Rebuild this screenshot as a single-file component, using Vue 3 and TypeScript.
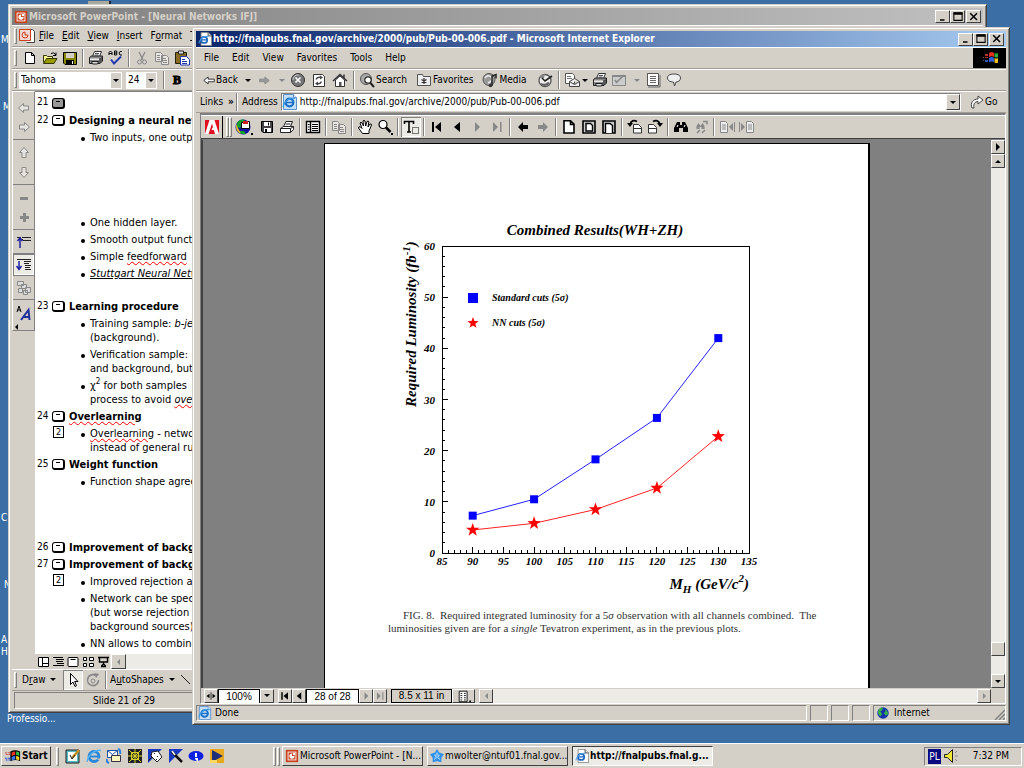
<script setup lang="ts">
interface Point { x: number; y: number }
interface Row { kind: 'head' | 'para' | 'gap' | 'gap-mid' | 'gap-small'; num?: string; title?: string; note?: string; html?: string; spell?: boolean; dim?: boolean }

const pptMenus = [['F', 'ile'], ['E', 'dit'], ['V', 'iew'], ['I', 'nsert'], ['', 'F', 'o', 'rmat'], ['T', 'ools']]
const pptTools = ['new', 'open', 'save-ppt', '|', 'print', 'spell', '|', 'cut', 'copy', 'paste']
const sideGroups = [['left', 'right'], ['up', 'down'], ['minus', 'plus'], ['collapse'], ['expand'], ['summary'], ['format']]
const viewIcons = ['view-normal', 'view-outline', 'view-slide', 'view-sorter', 'view-show']
const ieMenus = ['File', 'Edit', 'View', 'Favorites', 'Tools', 'Help']
const pdfTools = ['save', 'pdf-print', '|', 'nav', '|', 'copy', '|', 'hand', 'zoom', '|', 'text', '|', 'first', 'prev', 'next-off', 'last-off', '|', 'go-back', 'go-next', '|', 'page-actual', 'page-fit', 'page-width', '|', 'rot-left', 'rot-right', '|', 'find', 'find-next', '|', 'hl-prev', 'hl-next']
const quick = ['ql-desktop', 'ie', 'ql-mail', 'ql-net', 'ql-dice', 'ql-wand', 'ql-chat', 'ql-play']
const tasks = [
  { icon: 'ppt', label: 'Microsoft PowerPoint - [N...', active: false },
  { icon: 'star-app', label: 'mwolter@ntuf01.fnal.gov...', active: false },
  { icon: 'ie-page', label: 'http://fnalpubs.fnal.g...', active: true },
]

const rows: Row[] = [
  { kind: 'head', num: '21', title: '', dim: true },
  { kind: 'head', num: '22', title: 'Designing a neural network' },
  { kind: 'para', html: 'Two inputs, one output' },
  { kind: 'gap' },
  { kind: 'para', html: 'One hidden layer.' },
  { kind: 'para', html: 'Smooth output function' },
  { kind: 'para', html: 'Simple <s>feedforward</s>' },
  { kind: 'para', html: '<i class="u">Stuttgart Neural Network</i>' },
  { kind: 'gap-small' },
  { kind: 'head', num: '23', title: 'Learning procedure' },
  { kind: 'para', html: 'Training sample: <i>b-jets</i><br>(background).' },
  { kind: 'para', html: 'Verification sample:<br>and background, but' },
  { kind: 'para', html: 'χ<sup>2</sup> for both samples<br>process to avoid <s><i>over</i></s>' },
  { kind: 'head', num: '24', title: 'Overlearning', spell: true },
  { kind: 'para', note: '2', html: '<s>Overlearning</s> - network<br>instead of general rules' },
  { kind: 'head', num: '25', title: 'Weight function' },
  { kind: 'para', html: 'Function shape agrees' },
  { kind: 'gap-mid' },
  { kind: 'head', num: '26', title: 'Improvement of background' },
  { kind: 'head', num: '27', title: 'Improvement of background' },
  { kind: 'para', note: '2', html: 'Improved rejection a' },
  { kind: 'para', html: 'Network can be special<br>(but worse rejection<br>background sources)' },
  { kind: 'para', html: 'NN allows to combine' },
]

const plot = { left: 50, top: 30, right: 357, bottom: 337 }
const px = (m: number): number => plot.left + (m - 85) * (plot.right - plot.left) / 50
const py = (l: number): number => plot.bottom - l * (plot.bottom - plot.top) / 60
const masses = [90, 100, 110, 120, 130]
const toPoints = (values: number[]): Point[] => values.map((v, i) => ({ x: px(masses[i]), y: py(v) }))
const standard = toPoints([7.3, 10.5, 18.3, 26.4, 42])
const neural = toPoints([4.5, 5.8, 8.5, 12.7, 22.8])
const line = (pts: Point[]): string => pts.map(p => `${p.x},${p.y}`).join(' ')
const star = (cx: number, cy: number, r: number): string =>
  Array.from({ length: 10 }, (_, i) => {
    const a = -Math.PI / 2 + i * Math.PI / 5
    const q = i % 2 ? r * 0.4 : r
    return `${cx + q * Math.cos(a)},${cy + q * Math.sin(a)}`
  }).join(' ')
const xTicks = Array.from({ length: 51 }, (_, i) => 85 + i)
const yTicks = Array.from({ length: 31 }, (_, i) => i * 2)
const xLabels = xTicks.filter(t => t % 5 === 0)
const yLabels = yTicks.filter(t => t % 10 === 0)
</script>

<template>
  <svg class="defs" aria-hidden="true">
    <defs>
      <symbol id="ppt" viewBox="0 0 16 16"><path fill="#c8401c" d="M1 1h14v14H1z" /><path fill="#fff" d="M3 3h10v10H3z" /><path fill="#c8401c" d="M4 4h8v8H4z" /><path d="M8 5a3 3 0 1 0 3 3H8z" fill="#fff" /><path d="M9 4.500h2.500V7H9z" fill="#fff" /></symbol>
      <symbol id="ppt-doc" viewBox="0 0 16 16"><path fill="#fff" stroke="#444" d="M5.500 1.500h8l2 2v11h-8" /><path fill="#f4d8d0" stroke="#c8401c" d="M.5 1.500h11v11H.5z" /><path d="M6 4a3 3 0 1 0 3 3H6z" fill="none" stroke="#c8401c" /></symbol>
      <symbol id="ie" viewBox="0 0 16 16"><circle cx="8" cy="8.500" r="5" fill="none" stroke="#2a86d8" stroke-width="2.800" /><path d="M4 8.500h9" stroke="#2a86d8" stroke-width="2" /><path d="M9.500 10.500h5v2z" fill="#d4d0c8" /><path d="M1 14C2 7 9 1 15 2.500" fill="none" stroke="#58b0f0" stroke-width="1.500" /></symbol>
      <symbol id="ie-page" viewBox="0 0 16 16"><path fill="#fff" stroke="#888" d="M3.500.5h8l4 4v11h-12z" /><path fill="#ddd" stroke="#444" d="M11.500.5v4h4" /><circle cx="7" cy="9" r="3.500" fill="none" stroke="#2068c0" stroke-width="2" /><path d="M4 9h6" stroke="#2068c0" stroke-width="1.500" /><path d="M1 13C2 8 7 4 12 5" fill="none" stroke="#4ca0e8" stroke-width="1.200" /></symbol>
      <symbol id="ie-tile" viewBox="0 0 16 16"><path fill="#c4e0f8" stroke="#6090c8" d="M1.500.5h10l3 3v12h-13z" /><path fill="#fff" stroke="#6090c8" d="M11.500.5v3h3" /><circle cx="7.500" cy="8.500" r="3.800" fill="none" stroke="#1c70c8" stroke-width="2.200" /><path d="M4 8.500h7" stroke="#1c70c8" stroke-width="1.500" /><path d="M1 13C2 7 8 3 13 4.500" fill="none" stroke="#3c98e8" stroke-width="1.200" /></symbol>
      <symbol id="new" viewBox="0 0 16 16"><path fill="#fff" stroke="#000" d="M3.500 2.500h6l3 3v8h-9zM9.500 2.500v3h3" /></symbol>
      <symbol id="open" viewBox="0 0 16 16"><path fill="#ff9" stroke="#330" d="M1.500 12.500v-7h3l1 1h5v2" /><path fill="#990" stroke="#330" d="M1.500 13.500l3-5h10.500l-3 5z" /><path d="M9 3.500q3-2 5 1.500m0-2.500v3h-3" fill="none" stroke="#000" /></symbol>
      <symbol id="save-ppt" viewBox="0 0 16 16"><path fill="#880" stroke="#000" d="M1.500 2.500h13v12H3l-1.500-1.500z" /><path fill="#d4d0c8" d="M4 3h8v5H4z" /><path d="M4 10h8v4H4z" /><path fill="#fff" d="M10 11h1v3h-1z" /></symbol>
      <symbol id="save" viewBox="0 0 16 16"><path fill="#444" stroke="#000" d="M2.500 2.500h11v11H4l-1.500-1.500z" /><path fill="#fff" d="M5 3h6v4H5zM5 9h7v4H5z" /><path d="M9 3.500h1v3H9zM6 10h2v3H6z" /></symbol>
      <symbol id="print" viewBox="0 0 16 16"><path fill="#fff" stroke="#333" d="M4.500 6.500l2-5h7l-2 5" /><path d="M7 3.500h4M6.500 5h4" stroke="#555" /><path fill="#888" stroke="#222" d="M1.500 7.500l2-1.500h11v5l-2.500 2.500H1.500z" /><path fill="#eee" d="M2 8.500h9v1.500H2z" /><path fill="#ddd" stroke="#222" d="M3.500 11.500h7l-1 2.500h-5z" /><path d="M12 8v5M14 7v4" stroke="#222" /></symbol>
      <symbol id="pdf-print" viewBox="0 0 16 16"><path fill="#fff" stroke="#222" d="M4.500 7.500l2.500-5h6.500l-2 5M1.500 9.500l3-2h10v3l-3 3h-10z" /><path d="M1.500 9.500h10v4M11.500 9.500l3-2M6.500 5h5" fill="none" stroke="#222" /></symbol>
      <symbol id="spell" viewBox="0 0 16 16"><path d="M1 5V2.500L2.500 1 4 2.500V5M1 3.500h3M6.500 1v4h2q1-1 0-2 1-1 0-2zM6.500 3h2M14 1.500h-2L11 3l1 2h2" fill="none" stroke="#000" /><path d="M3 9.500l3 4 7-7" fill="none" stroke="#2238b0" stroke-width="2" /></symbol>
      <symbol id="cut" viewBox="0 0 16 16"><path d="M5 2l4 8M11 2L7 10" stroke="#888" stroke-width="1.300" /><circle cx="5.500" cy="12" r="2" fill="none" stroke="#888" /><circle cx="10.500" cy="12" r="2" fill="none" stroke="#888" /></symbol>
      <symbol id="copy" viewBox="0 0 16 16"><path fill="#e8e5e0" stroke="#888" d="M1.500 2.500h5l2 2v7h-7zM7.500 5.500h5l2 2v7h-7z" /><path d="M3 5.500h3M3 7.500h3M3 9.500h3M9 8.500h3M9 10.500h4M9 12.500h4" stroke="#888" /></symbol>
      <symbol id="paste" viewBox="0 0 16 16"><path fill="#886c20" stroke="#221" d="M1.500 2.500h11v11h-11z" /><path fill="#ddd" stroke="#222" d="M4.500 1h5v3h-5z" /><path fill="#fff" stroke="#2238b0" d="M6.500 6.500h6l3 3v5.500h-9z" /><path d="M8 9.500h3M8 11.500h5M8 13.500h5" stroke="#2238b0" /></symbol>
      <symbol id="left" viewBox="0 0 16 16"><path d="M2.500 8l5-4.500V6h5v4h-5v2.500z" fill="#e8e5e0" stroke="#888" /></symbol>
      <symbol id="right" viewBox="0 0 16 16"><path d="M13.500 8l-5-4.500V6h-5v4h5v2.500z" fill="#e8e5e0" stroke="#888" /></symbol>
      <symbol id="up" viewBox="0 0 16 16"><path d="M8 2.500L3.500 7.500H6v5h4v-5h2.500z" fill="#e8e5e0" stroke="#888" /></symbol>
      <symbol id="down" viewBox="0 0 16 16"><path d="M8 13.500L3.500 8.500H6v-5h4v5h2.500z" fill="#e8e5e0" stroke="#888" /></symbol>
      <symbol id="minus" viewBox="0 0 16 16"><path d="M4 7h8v3H4z" fill="#888" /></symbol>
      <symbol id="plus" viewBox="0 0 16 16"><path d="M4 7h3V4h3v3h3v3h-3v3H7v-3H4z" fill="#888" /></symbol>
      <symbol id="collapse" viewBox="0 0 16 16"><path d="M1 3.500h4M6 3.500h9M7 6.500h8M2 5.500h5" stroke="#222" /><path d="M4 14V4M1.500 7L4 4l2.500 3" fill="none" stroke="#2222a0" stroke-width="1.500" /></symbol>
      <symbol id="expand" viewBox="0 0 16 16"><path d="M1 2.500h14M8 4.500h7M8 6.500h5M9 8.500h6M9 10.500h5M9 12.500h6" stroke="#222" /><path d="M3 4v8M.5 9L3 12.500 5.500 9" fill="none" stroke="#2222a0" stroke-width="1.500" /></symbol>
      <symbol id="summary" viewBox="0 0 16 16"><path d="M1.500 1.500h6v4h-6zM5.500 4.500h5v4h-5zM2.500 8.500h4v4h-4zM9.500 7.500h5v5h-5zM7.500 10.500h4v4h-4z" fill="#ddd" stroke="#888" /></symbol>
      <symbol id="format" viewBox="0 0 16 16"><path d="M1 7l2-6 2 6M1.500 5h3" fill="none" stroke="#000" /><path d="M5 15l7.500-10 1 10M8 12h5" fill="none" stroke="#22309c" stroke-width="2" /></symbol>
      <symbol id="view-normal" viewBox="0 0 16 16"><path d="M3.500 3.500h10v9h-10zM7.500 3.500v9M7.500 9.500h6" fill="#fff" stroke="#000" /></symbol>
      <symbol id="view-outline" viewBox="0 0 16 16"><path d="M3 3.500h10M6 5.500h8M6 7.500h7M7 9.500h7M3 11.500h11" stroke="#000" /></symbol>
      <symbol id="view-slide" viewBox="0 0 16 16"><path d="M4 3.500h8q1 0 1 1v7q0 1-1 1H4q-1 0-1-1v-7q0-1 1-1zM5.500 5.500h5" fill="#fff" stroke="#000" /></symbol>
      <symbol id="view-sorter" viewBox="0 0 16 16"><path d="M3.500 3.500h3v3h-3zM9.500 3.500h4v3h-4zM3.500 9.500h3v3h-3zM9.500 9.500h4v3h-4z" fill="#fff" stroke="#000" /></symbol>
      <symbol id="view-show" viewBox="0 0 16 16"><path d="M3 3.500h11M4.500 4v4h8V4M8.500 8v3M6 12.500h5M6.500 12l2-2 2 2" fill="none" stroke="#000" stroke-width="1.400" /></symbol>
      <symbol id="pointer" viewBox="0 0 16 16"><path d="M5.500 1.500v11l2.500-2.500 2 4.500 1.500-.8-1.800-4.200h3.300z" fill="#fff" stroke="#000" /></symbol>
      <symbol id="rotate" viewBox="0 0 16 16"><path d="M11 3.500A5.500 5.500 0 1 0 13.500 8" fill="none" stroke="#888" stroke-width="1.600" /><path d="M9 1l5 1-3 4z" fill="#888" /><circle cx="8" cy="9" r="2" fill="none" stroke="#888" /></symbol>
      <symbol id="drawline" viewBox="0 0 16 16"><path d="M3 3l9 9" stroke="#222" /></symbol>
      <symbol id="back" viewBox="0 0 16 16"><path d="M2 8.500l5-4V7h7v3H7v2.500z" fill="#fff" stroke="#222" /></symbol>
      <symbol id="forward" viewBox="0 0 16 16"><path d="M14 8.500l-5-4V7H3v3h6v2.500z" fill="#999" stroke="#888" /></symbol>
      <symbol id="stop" viewBox="0 0 16 16"><circle cx="8" cy="8" r="6.500" fill="#777" stroke="#333" /><path d="M3 8a5 5 0 0 1 6-5" fill="none" stroke="#ccc" /><path d="M5.500 5.500l5 5m0-5l-5 5" stroke="#fff" stroke-width="1.600" /></symbol>
      <symbol id="refresh" viewBox="0 0 16 16"><path d="M2.500 2.500h9l2 2v10h-11z" fill="#fff" stroke="#333" /><path d="M5 7.500q1-3 5-2M10.500 9.500q-1 3-5 2" fill="none" stroke="#444" stroke-width="1.300" /><path d="M9 3.500l3 2-3 2zM7 9.500l-3 2 3 2z" fill="#444" /></symbol>
      <symbol id="home" viewBox="0 0 16 16"><path d="M3.500 8v6.500h9V8L8 4z" fill="#fff" stroke="#333" /><path d="M1 9l7-6.500L15 9M12 2.500V6" fill="none" stroke="#333" stroke-width="1.500" /><path d="M7 10h2.500v4H7z" fill="#555" /></symbol>
      <symbol id="search" viewBox="0 0 16 16"><circle cx="7" cy="7" r="5.500" fill="#aaa" stroke="#555" /><circle cx="9" cy="8" r="3.200" fill="#fff" stroke="#333" stroke-width="1.300" /><path d="M11 10.500l4 4.500" stroke="#222" stroke-width="2" /></symbol>
      <symbol id="fav" viewBox="0 0 16 16"><path d="M1.500 13.500v-11h5l1 2h7v9z" fill="#eee" stroke="#555" /><path d="M8 6v6M5.500 7.500l5 3M10.500 7.500l-5 3" stroke="#333" stroke-width="1.200" /></symbol>
      <symbol id="media" viewBox="0 0 16 16"><circle cx="7" cy="7.500" r="6" fill="#999" stroke="#555" /><path d="M3 6q3-4 6-1t-3 6" stroke="#eee" fill="none" stroke-width="1.500" /><path d="M10 14V4l4-1.500v4" fill="none" stroke="#222" stroke-width="1.500" /><circle cx="8.500" cy="13.500" r="1.800" fill="#333" /></symbol>
      <symbol id="history" viewBox="0 0 16 16"><circle cx="8" cy="8.500" r="6" fill="#eee" stroke="#555" stroke-width="1.300" /><path d="M3 6q0-4 5-4l-1 4z" fill="#888" /><path d="M4 13q5 3 9-2l-2-1q-3 3-7 1z" fill="#666" /><path d="M5 6l3 3 7-5" fill="none" stroke="#222" stroke-width="1.600" /></symbol>
      <symbol id="mail" viewBox="0 0 16 16"><path d="M1.500 1.500h7l2 2v8h-9z" fill="#fff" stroke="#555" /><path d="M3 4.500h4M3 6.500h5" stroke="#777" /><path d="M5.500 9.500l5-3 5 3v5h-10zM5.500 9.500l5 3 5-3" fill="#eee" stroke="#444" /></symbol>
      <symbol id="edit" viewBox="0 0 16 16"><path d="M1.500 3.500h13v10h-13z" fill="#ccc" stroke="#888" /><path d="M1 4h14" stroke="#888" stroke-width="2" /><path d="M6 10l7-7M4 8l2 3" stroke="#888" stroke-width="1.500" /></symbol>
      <symbol id="sheet" viewBox="0 0 16 16"><path d="M2.500 1.500h11v12h-11z" fill="#fff" stroke="#555" /><path d="M5 4.500h6M5 6.500h6M5 8.500h6M5 10.500h6M3 15h12V3" fill="none" stroke="#666" /></symbol>
      <symbol id="discuss" viewBox="0 0 16 16"><path d="M8 2c4.500 0 6.500 1.700 6.500 4S12.500 10 10 10l-1.500 4L7.500 10C4 10 1.500 8.500 1.500 6S3.500 2 8 2z" fill="#eee" stroke="#444" /></symbol>
      <symbol id="go" viewBox="0 0 16 16"><path d="M3 14C1 9 4 5 9 5V2l5 4-5 4V7.500C6 7.500 4 10 5 14z" fill="#fff" stroke="#444" /></symbol>
      <symbol id="adobe" viewBox="0 0 16 16"><path fill="#e01020" d="M1 1h14v14H1z" /><path fill="#fff" d="M5.500 1h5L15 15h-4L9.800 11H7.500l1-2.500h.6L8 4.500 4.500 15H1z" /></symbol>
      <symbol id="globe-pdf" viewBox="0 0 18 18"><circle cx="8" cy="9" r="7.500" fill="#14109c" /><path d="M2 5q3-5 8-3l-3 4-2 4-3-1zM3 13h6l2 3q-5 1-8-3z" fill="#10a030" /><path d="M1 6l3 6 2 4q-5-2-5-8z" fill="#e8c820" /><path d="M6.500 4.500l8-1v7h-8z" fill="#fff" stroke="#000" /><path d="M8 3h5v3H8z" fill="#d02020" /><path d="M16 15h2v2h-2z" /></symbol>
      <symbol id="nav" viewBox="0 0 16 16"><path d="M1.500 2.500h13v11h-13zM5.500 3v10" fill="#fff" stroke="#000" stroke-width="1.400" /><path d="M3 5.500h1.500M3 8h1.500M3 10.500h1.500M7 5.500h6M7 7.500h6M7 9.500h6M7 11.500h6" stroke="#000" /></symbol>
      <symbol id="hand" viewBox="0 0 16 16"><path d="M5.500 14.500L1.500 9q0-2 2-1l1.500 1.500L3 4q1-1.500 2 0l1.500 3L6 2q1-1.500 2 0l.7 5L10 2.500q1.500-1 1.800.5L11 8l2-3q1.500-.5 1.500 1l-2.500 6v2.500z" fill="#fff" stroke="#000" /></symbol>
      <symbol id="zoom" viewBox="0 0 16 16"><circle cx="6" cy="5.500" r="4" fill="#fff" stroke="#000" stroke-width="1.200" /><path d="M9 8.500l4.500 4.500" stroke="#000" stroke-width="2.500" /><path d="M14 14h2v2h-2z" /></symbol>
      <symbol id="text" viewBox="0 0 16 16"><path d="M1.500 5V2.500h9V5M6 2.500v10M4 13h4" fill="none" stroke="#000" stroke-width="1.600" /><path d="M9.500 8.500h6v6h-6z" fill="none" stroke="#000" stroke-dasharray="1 1" /></symbol>
      <symbol id="first" viewBox="0 0 16 16"><path d="M3 3h2v10H3zM12 3v10L6 8z" /></symbol>
      <symbol id="prev" viewBox="0 0 16 16"><path d="M11 3v10L5 8z" /></symbol>
      <symbol id="next-off" viewBox="0 0 16 16"><path d="M6 3v10l5-5z" fill="#888" /></symbol>
      <symbol id="last-off" viewBox="0 0 16 16"><path d="M4 3v10l5-5zM11 3h1.500v10H11z" fill="#888" /></symbol>
      <symbol id="go-back" viewBox="0 0 16 16"><path d="M3 8l5-5v3h5v4H8v3z" /></symbol>
      <symbol id="go-next" viewBox="0 0 16 16"><path d="M13 8L8 3v3H3v4h5v3z" fill="#888" /></symbol>
      <symbol id="page-actual" viewBox="0 0 16 16"><path d="M3 1.800h6.500L13 5v9H3zM9.500 2v3.500H13" fill="#fff" stroke="#000" stroke-width="1.600" /></symbol>
      <symbol id="page-fit" viewBox="0 0 16 16"><path d="M2 2h12v12H2z" fill="#ccc" stroke="#000" stroke-width="1.600" /><path d="M5 4.500h4.500L11.500 6.500v5.500H5z" fill="#fff" stroke="#000" stroke-width="1.400" /></symbol>
      <symbol id="page-width" viewBox="0 0 16 16"><path d="M2 2h12v12H2z" fill="#ccc" stroke="#000" stroke-width="1.600" /><path d="M4.500 14V4.500H9l2.500 2V14" fill="#fff" stroke="#000" stroke-width="1.400" /></symbol>
      <symbol id="rot-left" viewBox="0 0 16 16"><path d="M6.500 5.500h5l3 3v5.500h-8zM6.500 9.500h8" fill="#fff" stroke="#333" /><path d="M10 2.500Q5 0 3 5" fill="none" stroke="#000" stroke-width="1.600" /><path d="M0 4h6L3 8z" /></symbol>
      <symbol id="rot-right" viewBox="0 0 16 16"><path d="M1.500 5.500h5l3 3v5.500h-8zM1.500 9.500h8" fill="#fff" stroke="#333" /><path d="M6 2.500Q11 0 13 5" fill="none" stroke="#000" stroke-width="1.600" /><path d="M10 4h6l-3 4z" /></symbol>
      <symbol id="find" viewBox="0 0 16 16"><path d="M4 3h3v3h2V3h3l3 6v4h-5V9H6v4H1V9z" /><path d="M4 8l1-2M11 8l1-2" stroke="#fff" /></symbol>
      <symbol id="find-next" viewBox="0 0 16 16"><path d="M3.500 7l2-3 2 3 2-3 2 3v3h-3V8h-2v2h-3z" fill="#888" /><path d="M4 14l3-3M9 14l3-3M10 2.500h4v3" fill="none" stroke="#888" stroke-width="1.500" /></symbol>
      <symbol id="hl-prev" viewBox="0 0 16 16"><path d="M1.500 2.500h5l2 2v9h-7z" fill="#eee" stroke="#888" /><path d="M3 6h4M3 8h4M3 10h4" stroke="#888" /><path d="M14 4v8l-4-4zM15 3h1v10h-1z" fill="#888" /></symbol>
      <symbol id="hl-next" viewBox="0 0 16 16"><path d="M7.500 2.500h5l2 2v9h-7z" fill="#eee" stroke="#888" /><path d="M9 6h4M9 8h4M9 10h4" stroke="#888" /><path d="M2 4v8l4-4zM0 3h1v10H0z" fill="#888" /></symbol>
      <symbol id="earth" viewBox="0 0 16 16"><circle cx="8" cy="8" r="6.500" fill="#1430b0" /><path d="M3 4q3-3 5-2l-1 3-2 1 2 3-2 3Q1 9 3 4zM10 3l3 3 1 3-3 2-2-3 2-2z" fill="#38b048" /></symbol>
      <symbol id="flag" viewBox="0 0 18 16"><path d="M8 3q3-2 5 0v4q-2-1.500-5 0z" fill="#e03020" /><path d="M13.500 3q2 1 3.500 0v4q-1.500 1-3.500 0z" fill="#30b040" /><path d="M8 8q3-2 5 0v4.500q-2-2-5 0z" fill="#3060d8" /><path d="M13.500 8q2 1 3.500 0v4.500q-1.500 1-3.500 0z" fill="#f0c020" /><path d="M4 4h3v2H4zM4 7h3v1H4zM2 7h1v1H2z" fill="#b83030" /><path d="M4 10h3v2H4zM2 10h1v1H2z" fill="#3858b8" /></symbol>
      <symbol id="start" viewBox="0 0 18 16"><path d="M6 3q5-3 11 0v11q-5-3-11 0z" fill="#000" /><path d="M7.500 4q2-1 4-1v4q-2 0-4 1z" fill="#f03820" /><path d="M12.500 3q2 0 3.500 1v4q-2-1-3.500-1z" fill="#30c040" /><path d="M7.500 9q2-1 4-1v4q-2 0-4 1z" fill="#3878f0" /><path d="M12.500 8q2 0 3.500 1v4q-2-1-3.500-1z" fill="#f8d020" /><path d="M0 4h2v1H0zM3 4h3v1H3zM1 6h2v1H1zM4 6h2v1H4z" fill="#d02020" /><path d="M0 10h2v1H0zM3 10h3v1H3zM1 12h2v1H1zM4 12h2v1H4z" fill="#2040d0" /></symbol>
      <symbol id="ql-desktop" viewBox="0 0 16 16"><path d="M1 2h13v13H1z" fill="#58b8c0" stroke="#222" /><path d="M3 4h9v9H3z" fill="#fff" /><path d="M7 10l7-8" fill="none" stroke="#c89020" stroke-width="2.500" /><path d="M5 7l2 4 3-4" fill="none" stroke="#222" /></symbol>
      <symbol id="ql-mail" viewBox="0 0 16 16"><path d="M1.500 2.500h10v7h-10z" fill="#fff" stroke="#2050a0" /><path d="M1.500 2.500l5 4 5-4" fill="none" stroke="#2050a0" /><path d="M5.500 7.500h9v6h-9z" fill="#fff6c0" stroke="#334" /><path d="M12 1q3 1 2 5M3 15q-3-1-2-4" fill="none" stroke="#3080e0" stroke-width="2" /></symbol>
      <symbol id="ql-net" viewBox="0 0 16 16"><path d="M1 1h14v14H1z" fill="#222" /><path d="M2 2l12 12M14 2L2 14M8 1v14M1 8h14M4.500 4.500h7v7h-7z" fill="none" stroke="#d8d428" /></symbol>
      <symbol id="ql-dice" viewBox="0 0 16 16"><path d="M1 1h14L1 15z" fill="#1838c0" /><path d="M5 4l6-1 4 6-5 5-6-6z" fill="#fff" stroke="#222" /><path d="M7 5h1v1H7zM10 8h1v1h-1zM9 11h1v1H9z" fill="#222" /><path d="M1 13l4-4" stroke="#222" /></symbol>
      <symbol id="ql-wand" viewBox="0 0 16 16"><path d="M1 1h14L1 15z" fill="#1838c0" /><path d="M4 4l10 10" stroke="#111" stroke-width="2.500" /><path d="M4 3l3 4" stroke="#fff" stroke-width="1.500" /></symbol>
      <symbol id="ql-chat" viewBox="0 0 16 16"><ellipse cx="8" cy="8" rx="7.500" ry="5" fill="#1020e0" /><path d="M7 5h2v4H7zM7 10h3v4l-3-3z" fill="#fff" /></symbol>
      <symbol id="ql-play" viewBox="0 0 16 16"><path d="M1 1h14v14H1z" fill="#e8a820" /><path d="M3 2l11 6-11 6z" fill="#203078" /><path d="M1 12h7v3H1z" fill="#f8d860" /></symbol>
      <symbol id="star-app" viewBox="0 0 16 16"><path d="M8 0l2.500 4L16 6l-3 4v5l-5-1-5 1v-5L0 6l5.500-2z" fill="#3090e8" /><path d="M8 4l3 8-6-5h6l-6 5z" fill="none" stroke="#c0e4ff" stroke-width=".7" /></symbol>
      <symbol id="speaker" viewBox="0 0 16 16"><path d="M1.500 6.500h3l5-5v13l-5-5h-3z" fill="#f0e838" stroke="#222" /><path d="M12 5l2-2M12 8h3M12 11l2 2" stroke="#888" /></symbol>
      <symbol id="layout" viewBox="0 0 16 16"><path d="M2.500 2.500h9v12h-9z" fill="#fff" stroke="#000" /><path d="M4 5h2M8 5h2M4 7.500h2M8 7.500h2M4 10h2M8 10h2M4 12.500h2M8 12.500h2" stroke="#000" /><path d="M14 13h2v2h-2z" /></symbol>
      <symbol id="split" viewBox="0 0 16 16"><path d="M7.500 3h1v10h-1zM6 5v6L2 8zM10 5v6l4-3z" /></symbol>
      <symbol id="w-min" viewBox="0 0 16 16"><path d="M4 11h6v2H4z" /></symbol>
      <symbol id="w-max" viewBox="0 0 16 16"><path d="M2.500 2.500h11v10h-11z" fill="none" stroke="#000" stroke-width="1.400" /><path d="M2 2h12v3H2z" /></symbol>
      <symbol id="w-close" viewBox="0 0 16 16"><path d="M3 3l9 9M12 3l-9 9" stroke="#000" stroke-width="2" /></symbol>
    </defs>
  </svg>

  <main class="desktop">
    <span class="scrap s1">M</span><span class="scrap s2">M</span><span class="scrap s3">C</span><span class="scrap s4">N</span>
    <span class="scrap s5">A<br>H</span><span class="scrap s6">Professio...</span>
    <i class="peek"></i>

    <section class="window ppt">
      <header class="title">
        <svg class="i14"><use href="#ppt" /></svg>
        <h2>Microsoft PowerPoint - [Neural Networks IFJ]</h2>
        <div class="winbtns">
          <button aria-label="Minimize"><svg><use href="#w-min" /></svg></button><button aria-label="Maximize"><svg><use href="#w-max" /></svg></button><button aria-label="Close"><svg><use href="#w-close" /></svg></button>
        </div>
      </header>
      <nav class="bar menu">
        <i class="grip"></i>
        <svg class="i16"><use href="#ppt-doc" /></svg>
        <button v-for="m in pptMenus" :key="m.join('')"><template v-if="m.length === 2"><u>{{ m[0] }}</u>{{ m[1] }}</template><template v-else>{{ m[1] }}<u>{{ m[2] }}</u>{{ m[3] }}</template></button>
      </nav>
      <div class="bar tools">
        <i class="grip"></i>
        <template v-for="(t, n) in pptTools" :key="n"><i v-if="t === '|'" class="sep"></i><button v-else class="tool" :aria-label="t"><svg class="i16"><use :href="'#' + t" /></svg></button></template>
      </div>
      <div class="bar fonts">
        <i class="grip"></i>
        <label class="combo family"><select aria-label="Font"><option>Tahoma</option></select><span class="arrow"><i class="tri"></i></span></label>
        <label class="combo size"><select aria-label="Font size"><option>24</option></select><span class="arrow"><i class="tri"></i></span></label>
        <i class="sep"></i>
        <button class="bold">B</button>
      </div>
      <div class="work">
        <aside class="side">
          <div class="side-bar">
            <div v-for="(g, n) in sideGroups" :key="n" class="side-group" :class="{ pressed: g[0] === 'expand' }">
              <button v-for="s in g" :key="s" :aria-label="s"><svg class="i16"><use :href="'#' + s" /></svg></button>
            </div>
            <i class="more"></i>
          </div>
        </aside>
        <div class="pane">
          <div class="outline">
            <template v-for="(r, n) in rows" :key="n">
              <div v-if="r.kind === 'head'" class="head"><span class="num">{{ r.num }}</span><i class="slide" :class="{ dim: r.dim }"></i><b :class="{ spell: r.spell }">{{ r.title }}</b></div>
              <div v-else-if="r.kind === 'para'" class="para"><span v-if="r.note" class="note">{{ r.note }}</span><span class="dot"></span><p v-html="r.html"></p></div>
              <div v-else :class="r.kind"></div>
            </template>
          </div>
          <div class="views">
            <button v-for="v in viewIcons" :key="v" :aria-label="v"><svg class="i16"><use :href="'#' + v" /></svg></button>
            <button class="sb off" aria-label="Scroll left"><i class="tri l"></i></button>
          </div>
        </div>
      </div>
      <div class="bar draw">
        <i class="grip"></i>
        <button class="drawmenu">D<u>r</u>aw <i class="tri"></i></button>
        <button class="tool pointer" aria-label="Select"><svg class="i16"><use href="#pointer" /></svg></button>
        <button class="tool" aria-label="Rotate"><svg class="i16"><use href="#rotate" /></svg></button>
        <i class="sep"></i>
        <button class="shapes">A<u>u</u>toShapes <i class="tri"></i></button>
        <button class="tool" aria-label="Line"><svg class="i16"><use href="#drawline" /></svg></button>
      </div>
      <footer class="ppt-status"><span>Slide 21 of 29</span></footer>
    </section>

    <section class="window ie">
      <header class="title">
        <svg class="i14"><use href="#ie-page" /></svg>
        <h1>http://fnalpubs.fnal.gov/archive/2000/pub/Pub-00-006.pdf - Microsoft Internet Explorer</h1>
        <div class="winbtns">
          <button aria-label="Minimize"><svg><use href="#w-min" /></svg></button><button aria-label="Maximize"><svg><use href="#w-max" /></svg></button><button aria-label="Close"><svg><use href="#w-close" /></svg></button>
        </div>
      </header>
      <nav class="bar iemenu">
        <button v-for="m in ieMenus" :key="m">{{ m }}</button>
        <div class="logo"><svg><use href="#flag" /></svg></div>
      </nav>
      <div class="bar ietools">
        <button class="back"><svg class="i14"><use href="#back" /></svg>Back<i class="tri"></i></button>
        <button class="fwd" aria-label="Forward"><svg class="i14"><use href="#forward" /></svg><i class="tri grey"></i></button>
        <button class="tool" aria-label="Stop"><svg class="i16"><use href="#stop" /></svg></button>
        <button class="tool" aria-label="Refresh"><svg class="i16"><use href="#refresh" /></svg></button>
        <button class="tool" aria-label="Home"><svg class="i16"><use href="#home" /></svg></button>
        <i class="sep"></i>
        <button class="wide"><svg class="i16"><use href="#search" /></svg>Search</button>
        <button class="wide"><svg class="i16"><use href="#fav" /></svg>Favorites</button>
        <button class="wide"><svg class="i16"><use href="#media" /></svg>Media</button>
        <button class="tool" aria-label="History"><svg class="i16"><use href="#history" /></svg></button>
        <i class="sep"></i>
        <button class="drop" aria-label="Mail"><svg class="i16"><use href="#mail" /></svg><i class="tri"></i></button>
        <button class="tool" aria-label="Print"><svg class="i16"><use href="#print" /></svg></button>
        <button class="drop edit" aria-label="Edit"><svg class="i16"><use href="#edit" /></svg><i class="tri grey"></i></button>
        <button class="tool" aria-label="Related"><svg class="i16"><use href="#sheet" /></svg></button>
        <button class="tool" aria-label="Discuss"><svg class="i16"><use href="#discuss" /></svg></button>
      </div>
      <div class="bar address">
        <button class="links">Links <b>»</b></button>
        <i class="sep"></i>
        <label for="url">Address</label>
        <div class="field"><svg class="i16"><use href="#ie-tile" /></svg><input id="url" type="text" value="http://fnalpubs.fnal.gov/archive/2000/pub/Pub-00-006.pdf"><button class="sb" aria-label="Open list"><i class="tri"></i></button></div>
        <button class="gobtn"><svg class="i16"><use href="#go" /></svg>Go</button>
      </div>
      <div class="reader">
        <div class="pdfbar">
          <div class="adobe"><svg class="i16"><use href="#adobe" /></svg></div>
          <i class="grip"></i><i class="grip"></i>
          <button class="globe" aria-label="Open web page"><svg class="i18"><use href="#globe-pdf" /></svg></button>
          <template v-for="(t, n) in pdfTools" :key="n"><i v-if="t === '|'" class="sep"></i><button v-else class="tool" :class="{ pressed: t === 'text' }" :aria-label="t"><svg class="i16"><use :href="'#' + t" /></svg></button></template>
        </div>
        <div class="docrow">
          <div class="doc">
            <article class="page">
              <svg class="chart" viewBox="0 0 420 385" role="img" aria-label="Combined results chart">
                <text x="203" y="19" class="big" text-anchor="middle">Combined Results(WH+ZH)</text>
                <rect :x="plot.left" :y="plot.top" :width="plot.right - plot.left" :height="plot.bottom - plot.top" class="frame" />
                <line v-for="t in xTicks" :key="'x' + t" :x1="px(t)" :x2="px(t)" :y1="plot.bottom" :y2="plot.bottom - (t % 5 ? 3 : 6)" class="axis" />
                <line v-for="t in yTicks" :key="'y' + t" :x1="plot.left" :x2="plot.left + (t % 10 ? 3 : 6)" :y1="py(t)" :y2="py(t)" class="axis" />
                <text v-for="t in xLabels" :key="'xl' + t" :x="px(t)" y="349" text-anchor="middle" class="lab">{{ t }}</text>
                <text v-for="t in yLabels" :key="'yl' + t" x="43" :y="py(t) + 4" text-anchor="end" class="lab">{{ t }}</text>
                <text transform="translate(24 191) rotate(-90)" class="big">Required Luminosity (fb<tspan dy="-6" class="small">-1</tspan><tspan dy="6">)</tspan></text>
                <text x="357" y="373" text-anchor="end" class="big">M<tspan dy="4" class="small">H</tspan><tspan dy="-4"> (GeV/c</tspan><tspan dy="-7" class="small">2</tspan><tspan dy="7">)</tspan></text>
                <rect x="76" y="77" width="10" height="10" fill="#00f" />
                <polygon :points="star(81, 107, 6)" fill="#f00" />
                <text x="100" y="85" class="key">Standard cuts (5σ)</text>
                <text x="100" y="110" class="key">NN cuts (5σ)</text>
                <polyline :points="line(standard)" fill="none" stroke="#22f" />
                <polyline :points="line(neural)" fill="none" stroke="#f22" />
                <rect v-for="p in standard" :key="p.x" :x="p.x - 4" :y="p.y - 4" width="8" height="8" fill="#00f" />
                <polygon v-for="p in neural" :key="p.x" :points="star(p.x, p.y, 7)" fill="#f00" />
              </svg>
              <p class="caption">FIG. 8.&nbsp; Required integrated luminosity for a 5<i>σ</i> observation with all channels combined.&nbsp; The<br>luminosities given are for a <i>single</i> Tevatron experiment, as in the previous plots.</p>
            </article>
          </div>
          <div class="vscroll">
            <button class="sb" aria-label="Panel"><i class="tri r"></i></button>
            <button class="sb" aria-label="Up"><i class="tri t"></i></button>
            <div class="track"><i class="thumb"></i></div>
            <button class="sb" aria-label="Down"><i class="tri"></i></button>
          </div>
        </div>
        <div class="pdfstatus">
          <button class="sb" aria-label="Split"><svg class="i12"><use href="#split" /></svg></button>
          <input class="zoomval" aria-label="Zoom" value="100%"><button class="sb" aria-label="Zoom list"><i class="tri"></i></button>
          <i class="space"></i>
          <button class="sb" aria-label="First page"><svg class="i12"><use href="#first" /></svg></button><button class="sb" aria-label="Previous page"><svg class="i12"><use href="#prev" /></svg></button>
          <input class="pageval" aria-label="Page" value="28 of 28">
          <button class="sb off" aria-label="Next page"><svg class="i12"><use href="#next-off" /></svg></button><button class="sb off" aria-label="Last page"><svg class="i12"><use href="#last-off" /></svg></button>
          <i class="space"></i>
          <span class="papersize">8.5 x 11 in</span>
          <button class="sb layoutbtn" aria-label="Layout"><svg class="i14"><use href="#layout" /></svg></button>
          <i class="space"></i>
          <button class="sb off" aria-label="Left"><i class="tri l"></i></button>
          <div class="htrack"></div>
          <button class="sb off" aria-label="Right"><i class="tri r"></i></button>
          <i class="corner"></i>
        </div>
      </div>
      <footer class="iestatus">
        <span class="cell main"><svg class="i14"><use href="#ie-tile" /></svg>Done</span><span class="cell"></span><span class="cell"></span><span class="cell"></span>
        <span class="cell zone"><svg class="i14"><use href="#earth" /></svg>Internet<svg class="resize" viewBox="0 0 12 12"><path d="M2 12L12 2M6 12l6-6M10 12l2-2" stroke="#808080" stroke-width="1.500" /></svg></span>
      </footer>
    </section>

    <footer class="taskbar">
      <button class="start"><svg><use href="#start" /></svg>Start</button>
      <i class="grip"></i>
      <div class="quick"><button v-for="q in quick" :key="q" :aria-label="q"><svg class="i16"><use :href="'#' + q" /></svg></button></div>
      <i class="grip"></i><i class="grip"></i>
      <div class="tasks"><button v-for="t in tasks" :key="t.label" :class="{ active: t.active }"><svg class="i14"><use :href="'#' + t.icon" /></svg><span>{{ t.label }}</span></button></div>
      <div class="tray"><span class="lang">PL</span><svg class="i16"><use href="#speaker" /></svg><time>7:32 PM</time></div>
    </footer>
  </main>
</template>

<style>
html, body, #app { height: 100%; }
body { margin: 0; overflow: hidden; }
</style>

<style scoped>
.desktop, .desktop * { box-sizing: border-box; }
.desktop { position: relative; height: 100%; background: #3a6ea5; overflow: hidden; font: 10px/14px "DejaVu Sans Condensed", "DejaVu Sans", sans-serif; color: #000; white-space: nowrap; }
.defs { position: absolute; width: 0; height: 0; }
button, input, select { font: inherit; color: inherit; margin: 0; padding: 0; border: 0; background: none; border-radius: 0; outline: 0; }
svg { display: block; flex: none; }
.i18 { width: 18px; height: 18px; }
.i16 { width: 16px; height: 16px; }
.i14 { width: 14px; height: 14px; }
.i12 { width: 12px; height: 12px; }
h1, h2 { margin: 0; font: inherit; font-weight: bold; }
.tri { display: inline-block; flex: none; width: 0; height: 0; border: solid transparent; border-width: 3px 3px 0; border-top-color: #000; }
.tri.grey { border-top-color: #888; }
.tri.t { border-width: 0 3px 3px; border-color: transparent transparent #000; }
.tri.l { border-width: 3px 3px 3px 0; border-color: transparent #888 transparent transparent; }
.tri.r { border-width: 4px 0 4px 4px; border-color: transparent transparent transparent #000; }
.off .tri.r { border-width: 3px 0 3px 3px; border-left-color: #888; }
.sb { display: flex; flex: none; align-items: center; justify-content: center; width: 14px; height: 14px; background: #d4d0c8; border: 1px solid; border-color: #fff #404040 #404040 #fff; }
.grip { flex: none; width: 3px; height: 16px; margin-right: 2px; border: 1px solid; border-color: #fff #808080 #808080 #fff; }
.sep { flex: none; width: 2px; height: 18px; margin: 0 2px; border-left: 1px solid #808080; border-right: 1px solid #fff; }
.tool { display: flex; flex: none; align-items: center; justify-content: center; width: 20px; height: 20px; }
.scrap { position: absolute; color: #fff; line-height: 12px; }
.s1 { left: 1px; top: 34px; } .s2 { left: 3px; top: 101px; } .s3 { left: 1px; top: 512px; } .s4 { left: 4px; top: 579px; } .s5 { left: 1px; top: 634px; } .s6 { left: 7px; top: 713px; }
.peek { position: absolute; left: 88px; top: 1px; width: 23px; height: 4px; background: #a8aaa0; border-right: 2px solid #223; }

.window { position: absolute; display: flex; flex-direction: column; background: #d4d0c8; border: 1px solid; border-color: #d4d0c8 #404040 #404040 #d4d0c8; box-shadow: inset 1px 1px #fff, inset -1px -1px #808080; padding: 3px; }
.ppt { left: 8px; top: 4px; right: 37px; bottom: 55px; }
.ie { left: 192px; top: 27px; right: 14px; bottom: 43px; }
.title { display: flex; flex: none; align-items: center; height: 17px; padding: 0 2px; gap: 1px; }
.ppt .title { background: linear-gradient(90deg, #808080, #c0c0c0); color: #d4d0c8; }
.ie .title { background: linear-gradient(90deg, #0a246a, #a6caf0); color: #fff; height: 16px; }
.winbtns { display: flex; margin-left: auto; }
.winbtns button { width: 15px; height: 13px; background: #d4d0c8; border: 1px solid; border-color: #fff #404040 #404040 #fff; display: flex; align-items: center; justify-content: center; }
.winbtns button:last-child { margin-left: 1px; }
.winbtns svg { width: 12px; height: 12px; }
.bar { display: flex; flex: none; align-items: center; height: 22px; border-top: 1px solid #fff; border-bottom: 1px solid #a09c94; padding: 0 2px; overflow: hidden; }

.menu { gap: 8px; }
.menu .grip { margin-right: -6px; }
.menu .i16 { margin-right: -4px; }
.tools .grip { margin-right: 3px; }
.combo { display: flex; align-items: center; height: 17px; background: #fff; margin-right: 4px; }
.combo select { appearance: none; flex: 1; min-width: 0; padding-left: 2px; }
.arrow { display: flex; align-items: center; justify-content: center; width: 10px; height: 15px; background: #d4d0c8; margin-right: 1px; }
.family { width: 103px; } .size { width: 31px; }
.bold { width: 20px; font: bold 12px/14px "Liberation Serif", serif; -webkit-text-stroke: 1px #000; }
.work { display: flex; flex: 1; min-height: 0; }
.side { width: 23px; flex: none; }
.side-bar { border: 1px solid; border-color: #fff #808080 #808080 #fff; height: 240px; padding-top: 3px; display: flex; flex-direction: column; }
.side-group { border-bottom: 1px solid #808080; display: flex; flex-direction: column; align-items: center; padding: 3px 0; }
.side-group button { height: 19px; display: flex; align-items: center; }
.side-group:nth-child(n + 4) { padding: 2px 0; }
.side-group.pressed { padding: 1px 0; }
.side-group:nth-last-child(2) { border: 0; padding: 3px 0 0; }
.pressed { background: #ecebe6; box-shadow: inset 1px 1px #808080, inset -1px -1px #fff; }
.more { width: 0; height: 0; margin: 2px 0 0 2px; border: solid transparent; border-width: 3px 3px 3px 0; border-right-color: #000; }
.pane { flex: 1; min-width: 0; display: flex; flex-direction: column; }
.outline { flex: 1; min-height: 0; overflow: hidden; background: #fff; border-top: 1px solid #808080; padding-top: 2px; font-size: 11px; }
.head { display: flex; align-items: center; height: 17px; }
.head:first-child { height: 18px; }
.num { width: 17px; padding-left: 2px; font-size: 10px; line-height: 15px; align-self: flex-start; }
.slide { width: 13px; height: 11px; border: 1px solid #000; border-right-width: 2px; border-bottom-width: 2px; border-radius: 3px; margin-right: 4px; position: relative; }
.slide::after { content: ""; position: absolute; left: 3px; top: 2px; width: 4px; height: 1px; background: #000; }
.slide.dim { background: #999; }
.para { position: relative; display: flex; padding: 2px 0 1px 46px; line-height: 14px; }
.para p { margin: 0; }
.dot { width: 4px; height: 4px; border-radius: 50%; background: #000; margin: 6px 5px 0 0; }
.note { position: absolute; left: 18px; top: 1px; width: 11px; height: 12px; border: 1px solid #000; font-size: 9px; line-height: 10px; text-align: center; }
.para :deep(s), .spell { text-decoration: underline wavy #f00 1px; text-underline-offset: 1px; }
.para :deep(sup) { font-size: 8px; line-height: 0; }
.para :deep(.u) { text-decoration: underline; }
.gap { height: 68px; } .gap-mid { height: 49px; } .gap-small { height: 16px; }
.views { display: flex; flex: none; align-items: center; height: 15px; background: #ecebe6; }
.views button { width: 15px; height: 15px; background: #d4d0c8; }
.views .sb { margin-left: 1px; }
.draw { height: 22px; }
.draw .tri { margin: 0 0 2px 2px; }
.drawmenu { width: 40px; text-align: left; margin: 0 1px 0 3px; }
.pointer { background: #ecebe6; box-shadow: inset 1px 1px #808080, inset -1px -1px #fff; }
.shapes { width: 66px; text-align: left; margin-left: 1px; }
.ppt-status { flex: none; height: 18px; padding: 1px 2px; }
.ppt-status span { display: block; border: 1px solid; border-color: #808080 #fff #fff #808080; height: 17px; line-height: 15px; padding-left: 78px; }

.iemenu { gap: 13px; padding: 0 0 0 8px; }
.logo { margin-left: auto; background: #000; width: 33px; height: 20px; display: flex; align-items: center; justify-content: center; }
.logo svg { width: 18px; height: 16px; }
.ietools { padding-left: 6px; }
.ietools button { display: flex; align-items: center; }
.back { width: 49px; }
.back .tri { margin: 0 0 0 auto; }
.fwd { margin: 0 3px 0 6px; width: 28px; gap: 8px; }
.ietools .tool { margin-right: 1px; }
.ietools .sep { margin-right: 4px; }
.wide { margin-right: 9px; gap: 1px; }
.drop { width: 26px; gap: 2px; }
.edit { width: 32px; gap: 7px; }
.address { padding: 0 0 0 4px; }
.links { width: 34px; text-align: left; }
.links b { margin-left: 2px; }
.address label { margin: 0 3px 0 2px; }
.field { flex: 1; display: flex; align-items: center; height: 18px; background: #fff; border: 1px solid; border-color: #808080 #fff #fff #808080; }
.field input { flex: 1; min-width: 0; padding-left: 2px; }
.field .sb { height: 16px; }
.gobtn { display: flex; align-items: center; width: 45px; padding-left: 8px; }
.reader { flex: 1; min-height: 0; display: flex; flex-direction: column; border: 1px solid #808080; border-top-width: 2px; border-bottom-color: #fff; border-right-color: #fff; margin-left: 4px; }
.pdfbar { display: flex; flex: none; align-items: center; height: 24px; border-bottom: 1px solid #404040; border-top: 1px solid #fff; }
.adobe { display: flex; align-items: center; justify-content: center; width: 22px; height: 22px; border-right: 1px solid #000; margin-right: 3px; }
.pdfbar .grip { margin-right: 0; height: 20px; }
.globe { width: 24px; display: flex; justify-content: center; margin-right: 1px; }
.docrow { display: flex; flex: 1; min-height: 0; border-top: 1px solid #808080; border-left: 2px solid #404040; }
.doc { flex: 1; display: flex; justify-content: center; background: #808080; overflow: hidden; padding-top: 3px; }
.page { width: 546px; height: 704px; background: #fff; border: 1px solid #000; border-right-width: 2px; padding: 72px 60px 0 63px; }
.chart { width: 420px; height: 385px; margin-left: 4px; font-family: "Liberation Serif", serif; font-weight: bold; font-style: italic; }
.big { font-size: 15px; } .small { font-size: 11px; } .lab { font-size: 11px; } .key { font-size: 10px; }
.frame { fill: none; stroke: #000; shape-rendering: crispEdges; }
.axis { stroke: #000; shape-rendering: crispEdges; }
.caption { margin: 8px 0 0; font: 11px/13px "Liberation Serif", serif; text-indent: 15px; color: #333; }
.vscroll { width: 14px; flex: none; display: flex; flex-direction: column; }
.track { flex: 1; background: #ecebe6; display: flex; flex-direction: column; justify-content: flex-end; padding-bottom: 18px; }
.thumb { height: 14px; background: #d4d0c8; border: 1px solid; border-color: #fff #404040 #404040 #fff; }
.pdfstatus { display: flex; flex: none; height: 15px; align-items: center; padding-left: 3px; font: 10px/12px "Liberation Sans", sans-serif; }
.pdfstatus input { height: 14px; text-align: center; background: #fff; border: 1px solid #000; border-width: 1px 1px 0; }
.zoomval { width: 42px; } .pageval { width: 53px; }
.space { width: 4px; }
.papersize { width: 61px; height: 14px; border: 1px solid #000; text-align: center; }
.layoutbtn { width: 23px; }
.htrack { flex: 1; height: 14px; background: #ecebe6; }
.corner { width: 14px; }
.iestatus { display: flex; flex: none; gap: 3px; height: 17px; padding-top: 1px; }
.cell { display: flex; align-items: center; width: 18px; border: 1px solid; border-color: #808080 #fff #fff #808080; }
.main { flex: 1; gap: 3px; padding-left: 1px; }
.zone { width: 133px; gap: 4px; padding-left: 2px; }
.resize { width: 12px; height: 12px; margin: 2px 0 0 auto; }

.taskbar { position: absolute; left: 0; right: 0; bottom: 0; height: 25px; background: #d4d0c8; border-top: 1px solid #fff; display: flex; align-items: center; padding: 0 2px 0 1px; }
.start { display: flex; align-items: center; gap: 1px; width: 50px; height: 20px; font-weight: bold; padding-left: 3px; border: 1px solid; border-color: #fff #404040 #404040 #fff; margin-right: 5px; }
.start svg { width: 16px; height: 16px; }
.taskbar .grip { height: 19px; margin-right: 1px; }
.quick { display: flex; justify-content: space-between; width: 160px; margin: 0 48px 0 5px; }
.tasks { display: flex; gap: 4px; flex: 1; margin-left: 1px; }
.tasks button { display: flex; align-items: center; gap: 1px; flex: 0 1 141px; min-width: 0; height: 20px; padding-left: 2px; border: 1px solid; border-color: #fff #404040 #404040 #fff; text-align: left; overflow: hidden; }
.tasks .active { font-weight: bold; background: #ecebe6; border-color: #404040 #fff #fff #404040; }
.tray { display: flex; align-items: center; width: 98px; height: 19px; padding-left: 3px; gap: 2px; border: 1px solid; border-color: #808080 #fff #fff #808080; }
.lang { background: #0a0a80; color: #fff; width: 13px; height: 15px; line-height: 15px; text-align: center; }
.tray time { margin-left: auto; padding-right: 12px; }
</style>
